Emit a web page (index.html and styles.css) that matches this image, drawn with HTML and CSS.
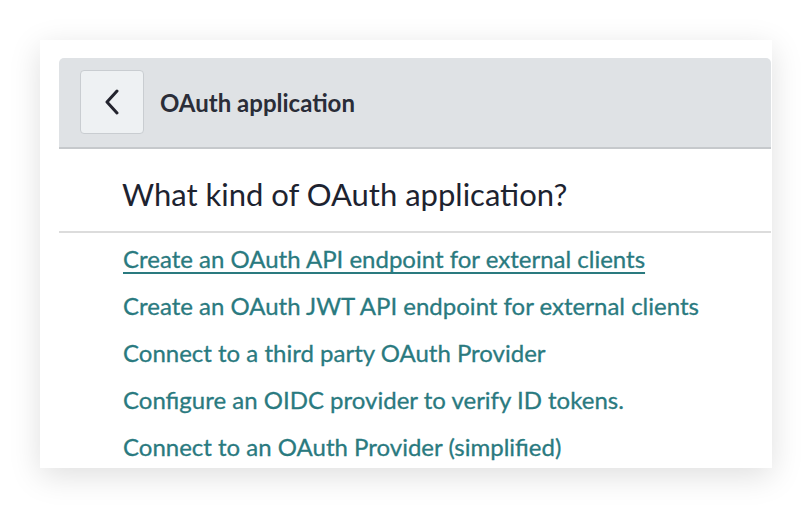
FILE: index.html
```html
<!DOCTYPE html>
<html>
<head>
<meta charset="utf-8">
<link rel="stylesheet" href="styles.css">
</head>
<body>
<div class="stage">
  <div class="card">
    <div class="header">
      <button class="back" aria-label="Back">
        <svg width="16" height="26" viewBox="0 0 16 26"><path d="M13 2 L3 13 L13 24" fill="none" stroke="#23242e" stroke-width="3" stroke-linecap="round" stroke-linejoin="round"/></svg>
      </button>
      <div class="title">OAuth application</div>
    </div>
    <h2 class="question">What kind of OAuth application?</h2>
    <ul class="links">
      <li><a class="active" href="#">Create an OAuth API endpoint for external clients</a></li>
      <li><a href="#">Create an OAuth JWT API endpoint for external clients</a></li>
      <li><a href="#">Connect to a third party OAuth Provider</a></li>
      <li><a href="#">Configure an OIDC provider to verify ID tokens.</a></li>
      <li><a href="#">Connect to an OAuth Provider (simplified)</a></li>
    </ul>
  </div>
</div>
</body>
</html>
```

FILE: styles.css
```css
html, body {
  margin: 0;
  padding: 0;
  background: #ffffff;
  font-family: Lato, "Open Sans", sans-serif;
}

.stage {
  padding: 40px;
  width: 732px;
}

.card {
  width: 713px;
  height: 410px;
  padding: 18px 0 0 19px;
  background: #ffffff;
  overflow: hidden;
  box-shadow: 0 8px 30px rgba(0, 0, 0, 0.13);
}

.header {
  display: flex;
  align-items: center;
  height: 91px;
  width: 712px;
  padding-left: 21px;
  box-sizing: border-box;
  background: #dfe2e5;
  border-bottom: 2px solid #c6c9cc;
  border-radius: 5px 5px 0 0;
}

.back {
  width: 64px;
  height: 64px;
  margin-top: -2px;
  display: flex;
  align-items: center;
  justify-content: center;
  background: #eef1f3;
  border: 1px solid #c9cdd1;
  border-radius: 4px;
  padding: 0;
}

.title {
  margin-left: 16px;
  margin-top: -1px;
  font-size: 24px;
  font-weight: 700;
  color: #2a2d38;
}

.question {
  margin: 0;
  width: 712px;
  padding: 25px 0 17px 63px;
  box-sizing: border-box;
  font-size: 31px;
  line-height: 40px;
  font-weight: 400;
  color: #1d2330;
  border-bottom: 2px solid #dcdcdc;
}

.links {
  list-style: none;
  margin: 0;
  padding: 2px 0 0 64px;
}

.links li {
  font-size: 24px;
  line-height: 47px;
  white-space: nowrap;
}

.links a {
  color: #2a7a7f;
  text-decoration: none;
  -webkit-text-stroke: 0.3px #2a7a7f;
}

.links a.active {
  text-decoration: underline;
  text-decoration-thickness: 2px;
  text-underline-offset: 4px;
}
```
